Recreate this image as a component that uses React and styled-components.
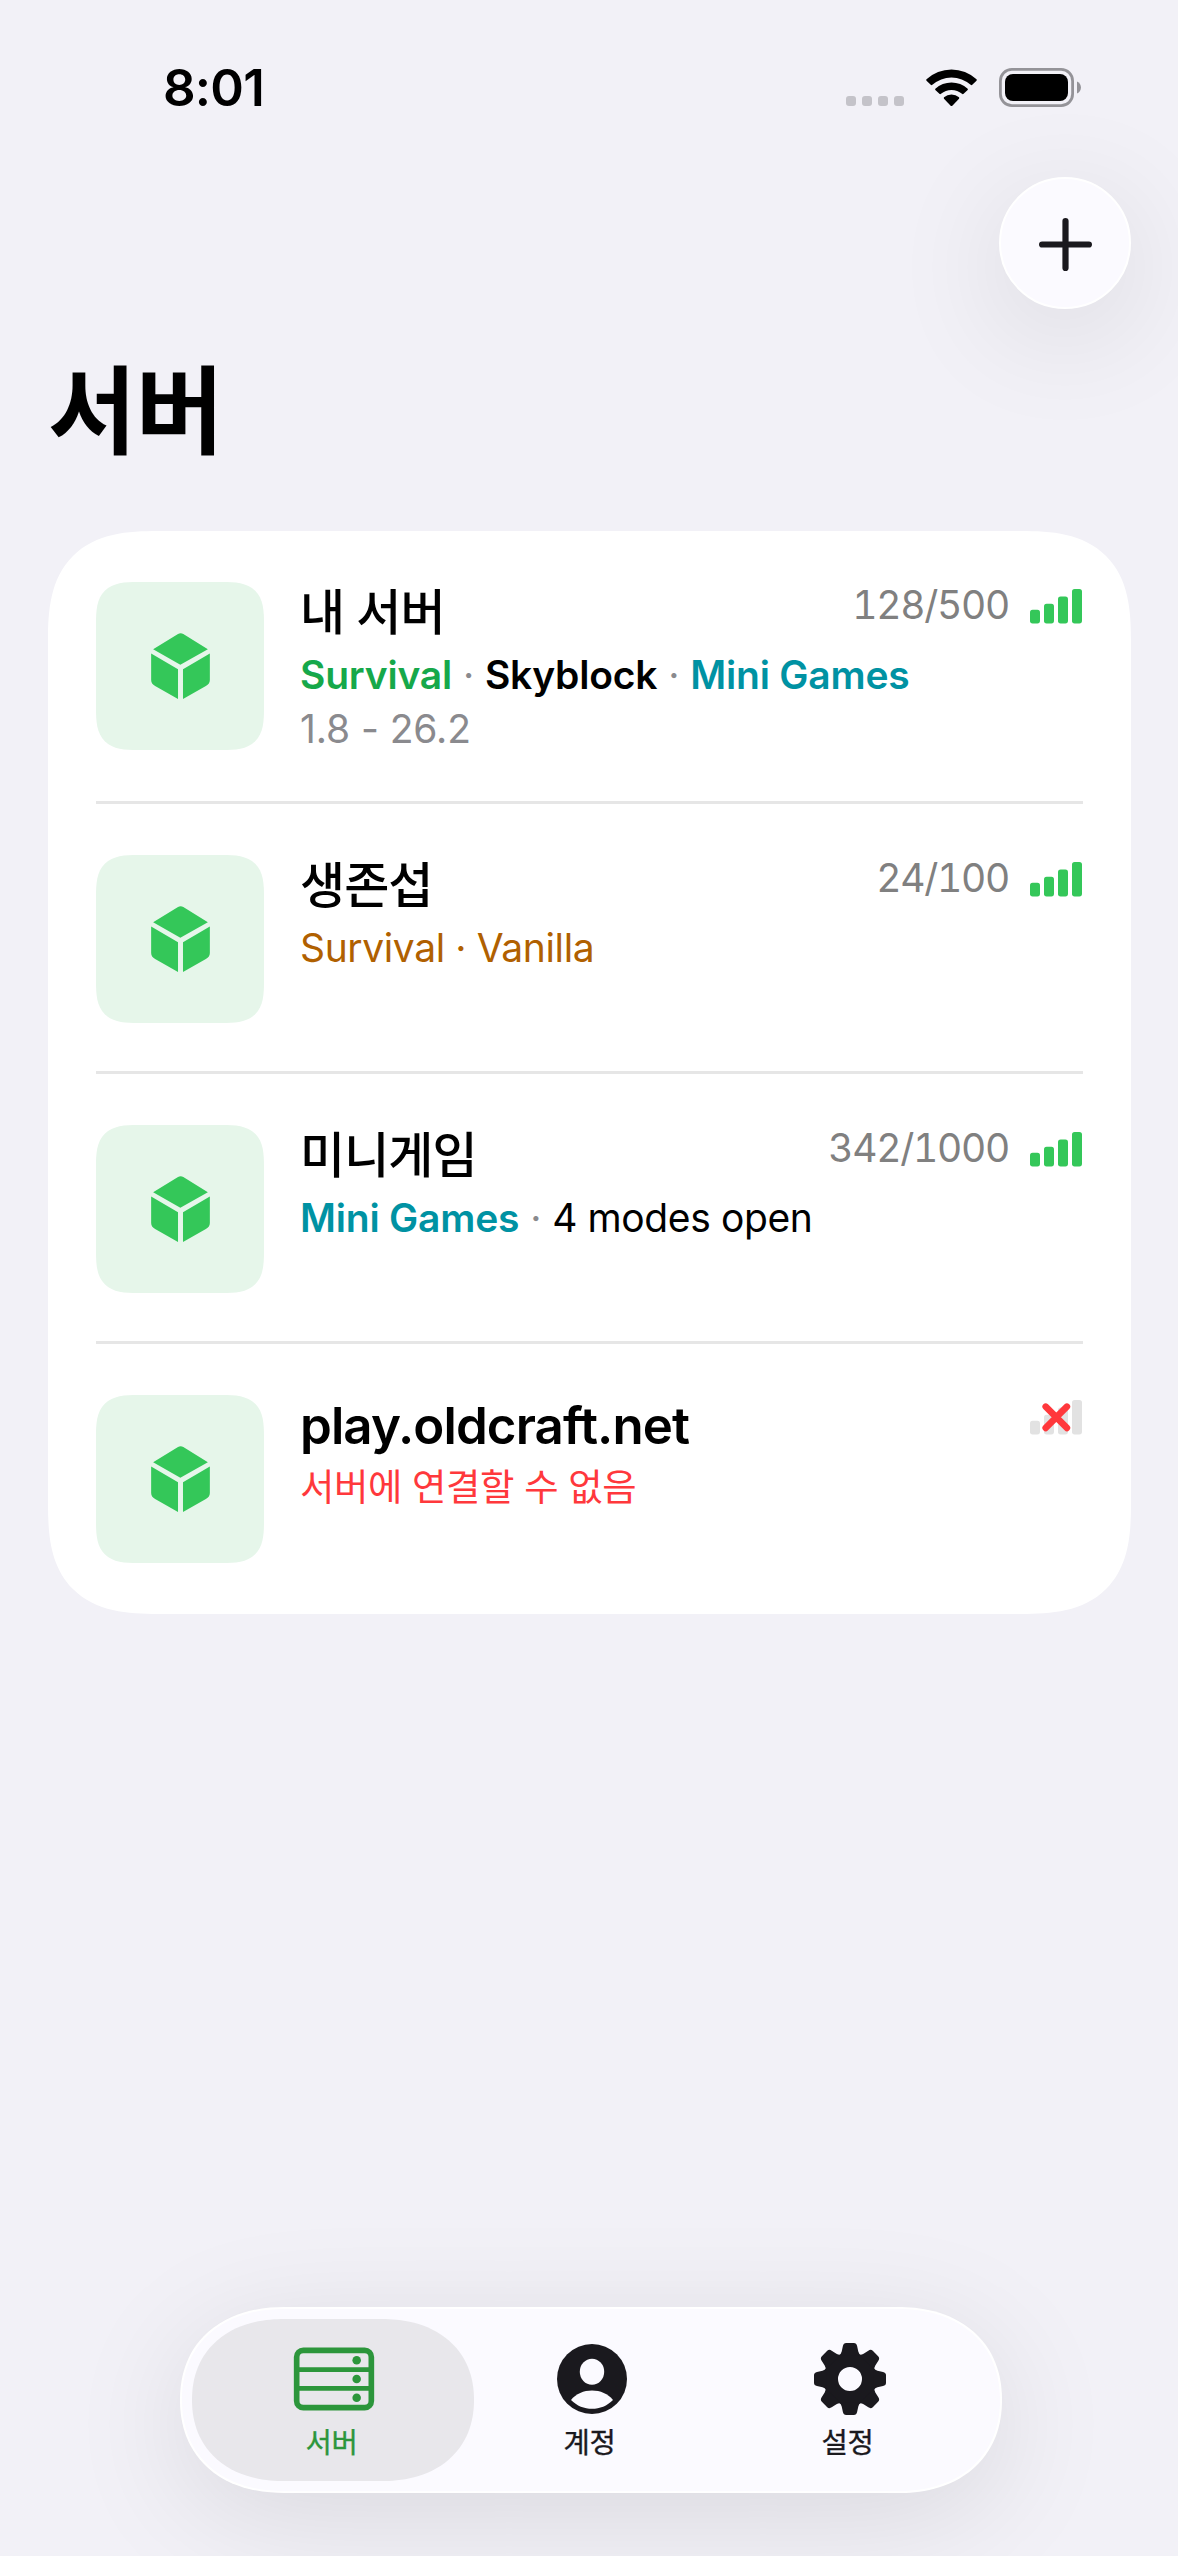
import React from 'react';
import styled, { createGlobalStyle } from 'styled-components';

const GlobalStyle = createGlobalStyle`
    * {
        box-sizing: border-box;
    }

    body {
        margin: 0;
        background: #f2f1f7;
        color: #000;
        font-family: Inter, "Noto Sans CJK KR", sans-serif;
    }
`;

const Screen = styled.div`
    display: flex;
    flex-direction: column;
    width: 1178px;
    height: 2556px;
    padding-bottom: 63px;
    overflow: hidden;
    background: #f2f1f7;
`;

const StatusBar = styled.div`
    display: flex;
    justify-content: space-between;
    align-items: flex-start;
    height: 177px;
    padding: 56px 97px 0 163px;
`;

const Time = styled.span`
    font-size: 51px;
    font-weight: 600;
    line-height: 63px;
    letter-spacing: -0.8px;
`;

const StatusIcons = styled.div`
    display: flex;
    align-items: flex-end;
    gap: 22px;
    margin-top: 12px;
    height: 39px;

    svg {
        display: block;
    }
`;

const Toolbar = styled.div`
    display: flex;
    justify-content: flex-end;
    padding: 0 47px;
`;

const AddButton = styled.button`
    display: flex;
    align-items: center;
    justify-content: center;
    width: 132px;
    height: 132px;
    padding: 3px 0 0;
    border: 2px solid #fff;
    border-radius: 50%;
    background: #fbfaff;
    box-shadow: 0 24px 120px rgba(0, 0, 0, 0.11);
`;

const Title = styled.h1`
    margin: 44px 48px 62px;
    font-size: 96px;
    font-weight: 700;
    line-height: 116px;
    letter-spacing: -0.8px;
`;

const ServerList = styled.ul`
    margin: 0 47px 0 48px;
    padding: 0 48px;
    list-style: none;
    background: #fff;
    border-radius: 110px;
    corner-shape: superellipse(1.43);
`;

const ServerRow = styled.li`
    display: flex;
    align-items: flex-start;
    padding: 51px 0 48px;
    border-bottom: 3px solid #e6e6e6;

    &:last-child {
        border-bottom-color: transparent;
    }
`;

const Tile = styled.div`
    display: flex;
    align-items: center;
    justify-content: center;
    flex: none;
    width: 168px;
    height: 168px;
    margin-right: 36px;
    border-radius: 42px;
    corner-shape: superellipse(1.56);
    background: #e6f6ea;
`;

const Info = styled.div`
    flex: 1;
    min-width: 0;
    margin-bottom: -3px;
    white-space: nowrap;
`;

const Name = styled.div`
    margin-bottom: 5px;
    font-size: ${({ $latin }) => ($latin ? '51px' : '49px')};
    font-weight: ${({ $latin }) => ($latin ? 600 : 500)};
    line-height: 61px;
    letter-spacing: -0.9px;
`;

const Motd = styled.div`
    font-size: 39px;
    line-height: 54px;
    letter-spacing: -0.1px;
    color: #8a8a8e;
`;

const Tag = styled.span`
    font-weight: ${({ $bold }) => ($bold ? 600 : 400)};
    letter-spacing: ${({ $bold }) => ($bold ? '-0.2px' : '-0.38px')};
    color: ${({ $color }) => $color || '#000'};
`;

const ErrorText = styled.div`
    font-size: 37.4px;
    line-height: 54px;
    letter-spacing: -0.4px;
    color: #ff383c;
`;

const Status = styled.div`
    display: flex;
    align-items: flex-start;
    gap: 21px;

    svg {
        display: block;
        margin-top: ${({ $offline }) => ($offline ? '4.5px' : '7px')};
    }
`;

const Players = styled.span`
    font-size: 39px;
    line-height: 46px;
    letter-spacing: -1.3px;
    font-variant-numeric: tabular-nums;
    color: #808080;
`;

const TabBar = styled.nav`
    display: flex;
    width: 822px;
    height: 186px;
    margin: auto 0 0 180px;
    padding: 10px;
    border: 2px solid #fff;
    border-radius: 104px / 93px;
    corner-shape: superellipse(1.14);
    background: #fbfaff;
    box-shadow: 0 24px 120px rgba(0, 0, 0, 0.1);
`;

const Tab = styled.a`
    display: flex;
    flex-direction: column;
    align-items: center;
    flex: none;
    width: 282px;
    height: 162px;
    margin-right: -24px;
    padding: 24px 0 0 1px;
    border-radius: 92px / 81px;
    corner-shape: superellipse(1.14);
    background: ${({ $active }) => ($active ? '#e8e7eb' : 'transparent')};
    color: ${({ $active }) => ($active ? '#2c963b' : '#1a191e')};

    svg {
        display: block;
    }
`;

const TabLabel = styled.span`
    margin: 8px 4px 0 0;
    font-size: 28.6px;
    font-weight: 400;
    line-height: 40px;
    letter-spacing: -0.4px;
    -webkit-text-stroke: 0.35px currentColor;
`;

const CubeIcon = () => (
    <svg width="59" height="66" viewBox="363 908 177 199" fill="#34c759">
        <path d="M369 957 L444 911 Q452 906 460 911 L534 957 L451 1004 Z" />
        <path d="M363 970 L444 1017 V1107 L375 1068 Q363 1062 363 1050 Z" />
        <path d="M540 970 L459 1017 V1107 L528 1068 Q540 1062 540 1050 Z" />
    </svg>
);

const BARS = [
    { x: 0, h: 13.6 },
    { x: 14, h: 19.6 },
    { x: 28, h: 26.8 },
    { x: 42, h: 34.4 },
];

const SignalIcon = ({ offline }) => (
    <svg width="53" height="35" viewBox="0 0 53 35">
        {BARS.map(({ x, h }) => (
            <rect key={x} x={x} y={34.4 - h} width="10" height={h} rx="2.6" fill={offline ? '#e2e2e2' : '#34c759'} />
        ))}
        {offline && (
            <path d="M15.7 6.7 L36.9 27.9 M36.9 6.7 L15.7 27.9" stroke="#ff383c" strokeWidth="6.6" strokeLinecap="round" />
        )}
    </svg>
);

const CellularIcon = () => (
    <svg width="58" height="11" viewBox="0 0 58 11" fill="#c4c3c9">
        {[0, 16, 32, 48].map((x) => (
            <rect key={x} x={x} y="0" width="10" height="10" rx="3" />
        ))}
    </svg>
);

const WifiIcon = () => (
    <svg width="51" height="39" viewBox="319 53 151 117">
        <path d="M319.5 87 A110 110 0 0 1 469.5 87 Q471 89 469.5 91 L456 104 Q454 105 452 103.5 A86 86 0 0 0 337 103.5 Q335 105 333 104 L319.5 91 Q318 89 319.5 87 Z" />
        <path d="M346 115 A72 72 0 0 1 443 115 Q444.5 117 443 119 L430 131 Q428 132 426 130.5 A48 48 0 0 0 363 130.5 Q361 132 359 131 L346 119 Q344.5 117 346 115 Z" />
        <path d="M372 141 A35 35 0 0 1 417 141 Q418.5 143 417 145 L397 166 Q394.5 168.5 392 166 L372 145 Q370.5 143 372 141 Z" />
    </svg>
);

const BatteryIcon = () => (
    <svg width="82" height="39" viewBox="0 0 82 39">
        <rect x="1.4" y="1.4" width="72.2" height="36.2" rx="11.5" fill="none" stroke="#949398" strokeWidth="2.8" />
        <rect x="6" y="6" width="63" height="27" rx="8" />
        <path d="M78 13.5 C83.3 15.5 83.3 23.5 78 25.5 Z" fill="#949398" />
    </svg>
);

const PlusIcon = () => (
    <svg width="53" height="53" viewBox="0 0 53 53" stroke="#1a191e" strokeWidth="6.2" strokeLinecap="round">
        <path d="M3.1 26.5 H49.9 M26.5 3.1 V49.9" />
    </svg>
);

const ServerIcon = () => (
    <svg width="82" height="72" viewBox="399.5 187.5 246 216" fill="none" stroke="#2c963b">
        <rect x="410.5" y="209.5" width="224" height="172" rx="20" strokeWidth="17" />
        <path d="M410 267.5 H635 M410 323.5 H635" strokeWidth="14" />
        <g fill="#2c963b" stroke="none">
            <circle cx="590.5" cy="239.5" r="12.8" />
            <circle cx="590.5" cy="295.5" r="12.8" />
            <circle cx="590.5" cy="351.5" r="12.8" />
        </g>
    </svg>
);

const AccountIcon = () => (
    <svg width="72" height="72" viewBox="-36 -36 72 72">
        <circle r="35" fill="#1a191e" />
        <ellipse cy="-7.2" rx="12.2" ry="13" fill="#fbfaff" />
        <path d="M-21 21 C-11.5 8.2 11.5 8.2 21 21 C9.5 32.8 -9.5 32.8 -21 21 Z" fill="#fbfaff" />
    </svg>
);

const GearIcon = () => (
    <svg width="72" height="72" viewBox="-36 -36 72 72" fill="#1a191e">
        <circle r="19" fill="none" stroke="#1a191e" strokeWidth="14" />
        {[0, 45, 90, 135, 180, 225, 270, 315].map((angle) => (
            <path
                key={angle}
                transform={`rotate(${angle})`}
                d="M-11 -23.5 Q-8.8 -25.2 -8.3 -27.5 L-7.1 -33 Q-6.5 -36 -3.8 -36 H3.8 Q6.5 -36 7.1 -33 L8.3 -27.5 Q8.8 -25.2 11 -23.5 Z"
            />
        ))}
    </svg>
);

const servers = [
    {
        name: '내 서버',
        players: '128/500',
        motd: (
            <>
                <Motd>
                    <Tag $bold $color="#16a84a">Survival</Tag> · <Tag $bold>Skyblock</Tag> · <Tag $bold $color="#0092a3">Mini Games</Tag>
                </Motd>
                <Motd>1.8 - 26.2</Motd>
            </>
        ),
    },
    {
        name: '생존섭',
        players: '24/100',
        motd: (
            <Motd>
                <Tag $color="#b06000">Survival · Vanilla</Tag>
            </Motd>
        ),
    },
    {
        name: '미니게임',
        players: '342/1000',
        motd: (
            <Motd>
                <Tag $bold $color="#0092a3">Mini Games</Tag> · <Tag>4 modes open</Tag>
            </Motd>
        ),
    },
    {
        name: 'play.oldcraft.net',
        latin: true,
        offline: true,
        motd: <ErrorText>서버에 연결할 수 없음</ErrorText>,
    },
];

const tabs = [
    { label: '서버', icon: <ServerIcon />, active: true },
    { label: '계정', icon: <AccountIcon /> },
    { label: '설정', icon: <GearIcon /> },
];

const App = () => {
    return (
        <>
            <GlobalStyle />
            <Screen>
                <StatusBar>
                    <Time>8:01</Time>
                    <StatusIcons>
                        <CellularIcon />
                        <WifiIcon />
                        <BatteryIcon />
                    </StatusIcons>
                </StatusBar>
                <Toolbar>
                    <AddButton>
                        <PlusIcon />
                    </AddButton>
                </Toolbar>
                <Title>서버</Title>
                <ServerList>
                    {servers.map(({ name, latin, players, offline, motd }) => (
                        <ServerRow key={name}>
                            <Tile>
                                <CubeIcon />
                            </Tile>
                            <Info>
                                <Name $latin={latin}>{name}</Name>
                                {motd}
                            </Info>
                            <Status $offline={offline}>
                                {players && <Players>{players}</Players>}
                                <SignalIcon offline={offline} />
                            </Status>
                        </ServerRow>
                    ))}
                </ServerList>
                <TabBar>
                    {tabs.map(({ label, icon, active }) => (
                        <Tab key={label} $active={active}>
                            {icon}
                            <TabLabel>{label}</TabLabel>
                        </Tab>
                    ))}
                </TabBar>
            </Screen>
        </>
    );
};

export default App;
